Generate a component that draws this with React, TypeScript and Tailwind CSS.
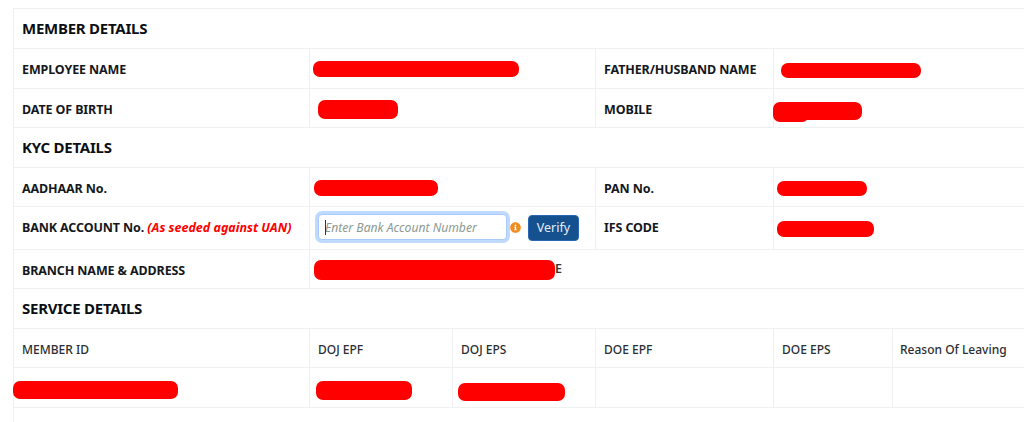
import { FaInfoCircle } from 'react-icons/fa';

const border = 'border border-[#eef0f2]';
const heading = `${border} px-2 text-[15px] font-bold tracking-[-0.25px] text-[#0b0f14]`;
const label = `${border} px-2 pt-1 text-[12.5px] font-bold tracking-[-0.12px] text-[#14181d]`;
const value = `${border} relative px-2 text-[12.5px] font-semibold text-[#333]`;
const th = `${border} px-2 pt-1 text-[12px] font-medium text-[#2a2e33]`;

// Red marks painted over the private values in the original capture
function Redact({ left, top, width, height }: { left: number; top: number; width: number; height: number }) {
  return (
    <span
      className="absolute rounded-[7px] bg-[#ff0000]"
      style={{ left, top, width, height }}
    />
  );
}

export default function App() {
  return (
    <div className="h-[422px] w-[1024px] overflow-hidden bg-white pt-2 pl-[13px] font-['Noto_Sans',sans-serif]">
      <div className="h-full border-l border-[#fdf3dc]">
        <table className="-ml-px w-[1040px] table-fixed border-collapse">
          <colgroup>
            <col className="w-[296px]" />
            <col className="w-[143px]" />
            <col className="w-[143px]" />
            <col className="w-[178px]" />
            <col className="w-[119px]" />
            <col className="w-[161px]" />
          </colgroup>
          <tbody>
            <tr className="h-[40px]">
              <td colSpan={6} className={heading}>MEMBER DETAILS</td>
            </tr>
            <tr className="h-[40px]">
              <td className={label}>EMPLOYEE NAME</td>
              <td colSpan={2} className={value}>
                <Redact left={3} top={12} width={206} height={16} />
              </td>
              <td className={label}>FATHER/HUSBAND NAME</td>
              <td colSpan={2} className={value}>
                <Redact left={7} top={14} width={140} height={15} />
              </td>
            </tr>
            <tr className="h-[39px]">
              <td className={label}>DATE OF BIRTH</td>
              <td colSpan={2} className={value}>
                <Redact left={8} top={11} width={80} height={19} />
              </td>
              <td className={label}>MOBILE</td>
              <td colSpan={2} className={value}>
                <Redact left={-1} top={13} width={89} height={18} />
                <Redact left={-1} top={14} width={36} height={19} />
              </td>
            </tr>
            <tr className="h-[40px]">
              <td colSpan={6} className={heading}>KYC DETAILS</td>
            </tr>
            <tr className="h-[39px]">
              <td className={label}>AADHAAR No.</td>
              <td colSpan={2} className={value}>
                <Redact left={4} top={12} width={124} height={16} />
              </td>
              <td className={label}>PAN No.</td>
              <td colSpan={2} className={value}>
                <Redact left={3} top={13} width={90} height={15} />
              </td>
            </tr>
            <tr className="h-[43px]">
              <td className={`${label} !pt-0`}>
                BANK ACCOUNT No.{' '}
                <span className="font-bold tracking-normal text-[#ff0000] italic">(As seeded against UAN)</span>
              </td>
              <td colSpan={2} className={`${border} pl-[8px]`}>
                <div className="flex -translate-y-px items-center">
                  <div className="relative">
                    <input
                      readOnly
                      placeholder="Enter Bank Account Number"
                      className="h-[26px] w-[189px] rounded-[4px] border border-[#a9cbfe] bg-white pl-[6px] text-[12.15px] italic shadow-[0_0_0_3px_#bfd9ff] outline-none placeholder:text-[#8b9a92]"
                    />
                    <span className="absolute top-[6px] left-[7px] h-[15px] w-px bg-[#333]" />
                  </div>
                  <FaInfoCircle className="ml-[3px] text-[11px] text-[#f28c1c]" />
                  <button className="mt-[2px] ml-[7px] flex h-[26px] w-[51px] items-center justify-center rounded-[4px] border border-[#2a68b3] bg-[#15508f] text-[12.5px] text-[#e6eef6]">
                    Verify
                  </button>
                </div>
              </td>
              <td className={`${label} !pt-0`}>IFS CODE</td>
              <td colSpan={2} className={value}>
                <Redact left={3} top={14} width={97} height={16} />
              </td>
            </tr>
            <tr className="h-[39px]">
              <td className={label}>BRANCH NAME &amp; ADDRESS</td>
              <td colSpan={5} className={`${value} pl-[245px]`}>
                E
                <Redact left={4} top={10} width={241} height={20} />
              </td>
            </tr>
            <tr className="h-[40px]">
              <td colSpan={6} className={heading}>SERVICE DETAILS</td>
            </tr>
            <tr className="h-[39px]">
              <td className={th}>MEMBER ID</td>
              <td className={th}>DOJ EPF</td>
              <td className={th}>DOJ EPS</td>
              <td className={th}>DOE EPF</td>
              <td className={th}>DOE EPS</td>
              <td className={`${th} !pl-[7px]`}>Reason Of Leaving</td>
            </tr>
            <tr className="h-[40px]">
              <td className={`${border} relative`}>
                <Redact left={-1} top={13} width={165} height={18} />
              </td>
              <td className={`${border} relative`}>
                <Redact left={6} top={13} width={96} height={19} />
              </td>
              <td className={`${border} relative`}>
                <Redact left={5} top={15} width={107} height={18} />
              </td>
              <td className={border} />
              <td className={border} />
              <td className={border} />
            </tr>
          </tbody>
        </table>
      </div>
    </div>
  );
}
